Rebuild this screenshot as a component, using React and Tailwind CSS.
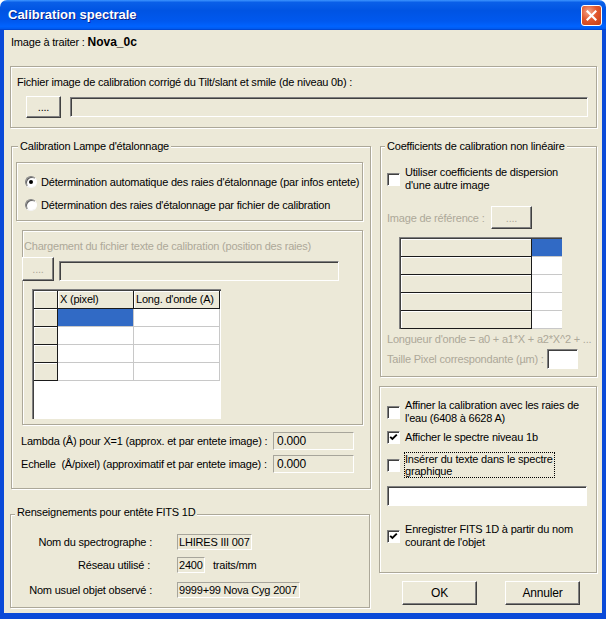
import React from "react";

const etched = "border border-[#aca899] shadow-[inset_1px_1px_0_#fff,1px_1px_0_#fff]";
const raised =
  "border border-t-white border-l-white border-r-[#404040] border-b-[#404040] shadow-[inset_-1px_-1px_0_#808080] bg-[#ece9d8]";
const sunken =
  "border border-t-[#808080] border-l-[#808080] border-r-white border-b-white shadow-[inset_1px_1px_0_#404040]";
const flat = "border border-t-[#a7a59b] border-l-[#a7a59b] border-r-white border-b-white";
const grey = "text-[#aca899]";

const Group = ({ label, labelClass = "-mt-[8px] ml-[6px]", className = "", children }) => (
  <div className={`${etched} ${className}`}>
    {label && <div className={`${labelClass} w-fit bg-[#ece9d8] px-[2px] leading-[14px]`}>{label}</div>}
    {children}
  </div>
);

const Button = ({ children, className = "", disabled }) => (
  <div className={`${raised} flex items-center justify-center ${disabled ? grey : ""} ${className}`}>
    {children}
  </div>
);

const Check = ({ checked }) => (
  <span className={`w-[13px] h-[13px] shrink-0 bg-white ${sunken} flex items-center justify-center`}>
    {checked && (
      <svg width="9" height="9" viewBox="0 0 9 9">
        <polyline points="1.2,3.8 3.4,6 7.8,1.6" fill="none" stroke="#000" strokeWidth="1.9" />
      </svg>
    )}
  </span>
);

const Radio = ({ checked }) => (
  <span className="w-[12px] h-[12px] shrink-0 rounded-full bg-white border border-t-[#808080] border-l-[#808080] border-r-white border-b-[#f4f4f4] shadow-[inset_1px_1px_0_#606060] flex items-center justify-center">
    {checked && <span className="w-[4px] h-[4px] rounded-full bg-black" />}
  </span>
);

const HeadCell = ({ className = "", children }) => (
  <div className={`bg-[#ece9d8] border-r border-b border-[#1a1a1a] shadow-[inset_1px_1px_0_#fff] pl-[2px] leading-[17px] whitespace-nowrap overflow-hidden ${className}`}>
    {children}
  </div>
);

const Cell = ({ className = "", active }) => (
  <div className={`border-r border-b border-[#c8c8c8] ${active ? "bg-[#316ac5]" : "bg-white"} ${className}`} />
);

const TitleBar = () => (
  <div className="h-[30px] shrink-0 rounded-t-[7px] bg-[linear-gradient(180deg,#3d95ff_0%,#0a5fe8_8%,#0054e3_35%,#0058ee_70%,#0063ff_88%,#005bf0_95%,#0040c8_100%)] flex items-center justify-between pl-[8px] pr-[4px]">
    <span className="text-white font-bold text-[13px] tracking-[0px] [text-shadow:1px_1px_0_#0a1f8a]">
      Calibration spectrale
    </span>
    <div className="w-[21px] h-[21px] rounded-[3px] border border-white bg-[radial-gradient(circle_at_35%_30%,#f3a58a_0%,#e2582e_45%,#c43d14_100%)] flex items-center justify-center">
      <svg width="11" height="11" viewBox="0 0 11 11">
        <path d="M1.5 1.5 L9.5 9.5 M9.5 1.5 L1.5 9.5" stroke="#fff" strokeWidth="2.2" strokeLinecap="square" />
      </svg>
    </div>
  </div>
);

export default function App() {
  return (
    <div className="w-[606px] h-[619px] bg-white font-['Liberation_Sans',Arial,sans-serif] text-[11px] leading-[14px] text-black tracking-[-0.2px] flex flex-col">
      <TitleBar />
      <div className="flex-1 min-h-0 bg-[#ece9d8] border-x-4 border-b-[6px] border-[#0a4ad8] pl-[6px] pr-[5px] pt-[5px]">
        {/* Image line */}
        <div className="pl-[1px]">
          Image à traiter : <span className="font-bold text-[12px] tracking-[0px]">Nova_0c</span>
        </div>

        {/* Calibration file */}
        <Group className="mt-[17px] h-[62px] pl-[6px] pt-[8px]">
          <div>Fichier image de calibration corrigé du Tilt/slant et smile (de niveau 0b) :</div>
          <div className="mt-[7px] ml-[9px] flex items-center">
            <Button className="w-[35px] h-[22px]">....</Button>
            <div className={`ml-[9px] w-[518px] h-[20px] ${sunken}`} />
          </div>
        </Group>

        <div className="mt-[18px] flex gap-[8px] items-start">
          {/* Left column */}
          <div className="w-[361px] flex flex-col">
            <Group label="Calibration Lampe d'étalonnage" className="ml-[1px] w-[360px] h-[343px]">
              <div className={`${etched} mt-[9px] ml-[4px] w-[347px] h-[59px] pt-[12px] pl-[8px]`}>
                <div className="flex items-center gap-[4px]">
                  <Radio checked />
                  <span>Détermination automatique des raies d'étalonnage (par infos entete)</span>
                </div>
                <div className="mt-[9px] flex items-center gap-[4px]">
                  <Radio />
                  <span>Détermination des raies d'étalonnage par fichier de calibration</span>
                </div>
              </div>

              <div className={`${etched} mt-[9px] ml-[10px] w-[341px] h-[195px] pt-[8px]`}>
                <div className={`ml-[1px] ${grey}`}>Chargement du fichier texte de calibration (position des raies)</div>
                <div className="mt-[4px] -ml-[1px] flex items-end">
                  <Button disabled className="w-[32px] h-[24px]">....</Button>
                  <div className={`ml-[5px] w-[280px] h-[20px] ${sunken}`} />
                </div>
                <div className="mt-[8px] ml-[9px] w-[189px] h-[130px] bg-white border-t border-l border-[#808080] shadow-[inset_1px_1px_0_#404040] pt-[1px] pl-[1px]">
                  <div className="flex h-[18px]">
                    <HeadCell className="w-[24px]" />
                    <HeadCell className="w-[76px]">X (pixel)</HeadCell>
                    <HeadCell className="w-[86px]">Long. d'onde (A)</HeadCell>
                  </div>
                  {[0, 1, 2, 3].map((i) => (
                    <div key={i} className="flex h-[18px]">
                      <HeadCell className="w-[24px]" />
                      <Cell className="w-[76px]" active={i === 0} />
                      <Cell className="w-[86px]" />
                    </div>
                  ))}
                </div>
              </div>

              <div className="mt-[7px] ml-[9px] flex items-center h-[18px]">
                <span className="w-[252px] whitespace-nowrap">Lambda (Å) pour X=1 (approx. et par entete image) :</span>
                <div className={`w-[81px] h-[18px] ${flat} pl-[3px] leading-[16px] text-[12px]`}>0.000</div>
              </div>
              <div className="mt-[5px] ml-[9px] flex items-center h-[18px]">
                <span className="w-[252px] whitespace-pre">Echelle  (Å/pixel) (approximatif et par entete image) :</span>
                <div className={`w-[81px] h-[18px] ${flat} pl-[3px] leading-[16px] text-[12px]`}>0.000</div>
              </div>
            </Group>

            <Group
              label="Renseignements pour entête FITS 1D"
              labelClass="-mt-[10px] ml-[4px]"
              className="mt-[25px] w-[360px] h-[94px]"
            >
              <div className="mt-[15px] flex items-center h-[16px]">
                <span className="w-[141px] text-right whitespace-nowrap">Nom du spectrographe :</span>
                <div className={`ml-[25px] w-[75px] h-[16px] ${flat} pl-[1px] leading-[14px] whitespace-nowrap`}>LHIRES III 007</div>
              </div>
              <div className="mt-[7px] flex items-center h-[16px]">
                <span className="w-[139px] text-right whitespace-nowrap">Réseau utilisé :</span>
                <div className={`ml-[27px] w-[28px] h-[16px] ${flat} pl-[1px] leading-[14px] whitespace-nowrap`}>2400</div>
                <span className="ml-[8px] whitespace-nowrap">traits/mm</span>
              </div>
              <div className="mt-[9px] flex items-center h-[16px]">
                <span className="w-[141px] text-right whitespace-nowrap">Nom usuel objet observé :</span>
                <div className={`ml-[25px] w-[123px] h-[16px] ${flat} pl-[1px] leading-[14px] whitespace-nowrap`}>9999+99 Nova Cyg 2007</div>
              </div>
            </Group>
          </div>

          {/* Right column */}
          <div className="w-[218px] flex flex-col">
            <Group
              label="Coefficients de calibration non linéaire"
              labelClass="-mt-[8px] ml-[4px] whitespace-nowrap"
              className="ml-[1px] w-[217px] h-[231px]"
            >
              <div className="mt-[13px] pl-[6px] flex items-center gap-[5px]">
                <Check />
                <span className="leading-[13px]">
                  Utiliser coefficients de dispersion
                  <br />
                  d'une autre image
                </span>
              </div>
              <div className="mt-[14px] pl-[6px] flex items-center h-[23px]">
                <span className={`w-[104px] whitespace-nowrap ${grey}`}>Image de référence :</span>
                <Button disabled className="w-[41px] h-[23px]">....</Button>
              </div>
              <div className="mt-[8px] ml-[18px] w-[163px] h-[92px] bg-white border-t border-l border-[#808080] shadow-[inset_1px_1px_0_#404040] pt-[1px] pl-[1px]">
                {[0, 1, 2, 3, 4].map((i) => (
                  <div key={i} className="flex h-[18px]">
                    <HeadCell className="w-[131px]" />
                    <Cell className="w-[30px] border-r-0" active={i === 0} />
                  </div>
                ))}
              </div>
              <div className={`mt-[3px] ml-[6px] whitespace-nowrap ${grey}`}>
                Longueur d'onde = a0 + a1*X + a2*X^2 + ...
              </div>
              <div className="mt-[3px] ml-[6px] flex items-center h-[20px]">
                <span className={`w-[160px] whitespace-nowrap ${grey}`}>Taille Pixel correspondante (µm) :</span>
                <div className={`w-[31px] h-[20px] bg-white ${sunken}`} />
              </div>
            </Group>

            <div className={`${etched} mt-[9px] w-[218px] h-[187px] pl-[7px]`}>
              <div className="mt-[12px] flex items-center gap-[5px]">
                <Check />
                <span className="leading-[13px]">
                  Affiner la calibration avec les raies de
                  <br />
                  l'eau (6408 à 6628 A)
                </span>
              </div>
              <div className="mt-[6px] flex items-center gap-[5px]">
                <Check checked />
                <span className="leading-[13px]">Afficher le spectre niveau 1b</span>
              </div>
              <div className="mt-[8px] flex items-center">
                <Check />
                <span className="ml-[4px] w-[151px] border border-dotted border-black pl-[0px] leading-[12px]">
                  Insérer du texte dans le spectre
                  <br />
                  graphique
                </span>
              </div>
              <div className={`mt-[8px] w-[200px] h-[20px] bg-white ${sunken}`} />
              <div className="mt-[17px] flex items-center gap-[5px]">
                <Check checked />
                <span className="leading-[13px]">
                  Enregistrer FITS 1D à partir du nom
                  <br />
                  courant de l'objet
                </span>
              </div>
            </div>

            <div className="mt-[8px] ml-[23px] flex gap-[28px]">
              <Button className="w-[75px] h-[24px] text-[12px]">OK</Button>
              <Button className="w-[75px] h-[24px] text-[12px]">Annuler</Button>
            </div>
          </div>
        </div>
      </div>
    </div>
  );
}
